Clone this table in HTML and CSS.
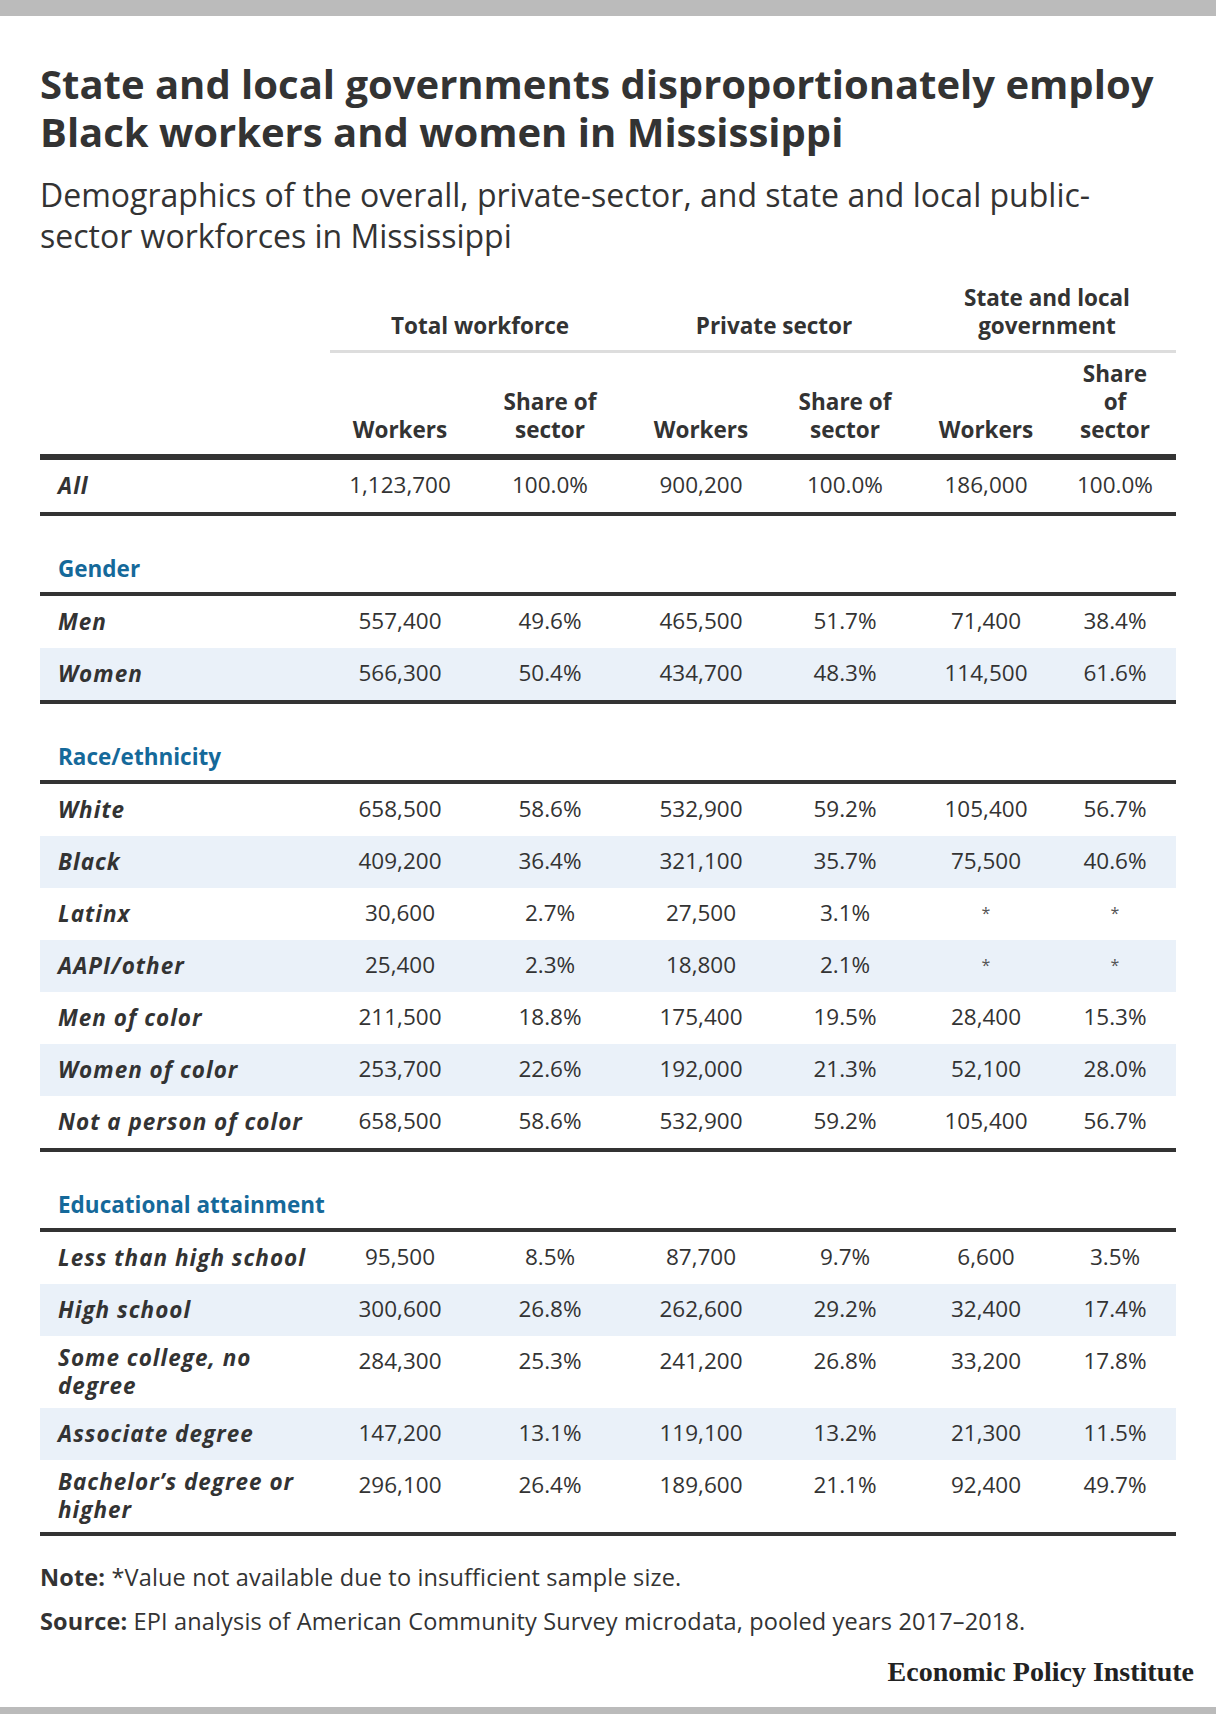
FILE: index.html
```html
<!DOCTYPE html>
<html lang="en">
<head>
<meta charset="utf-8">
<title>State and local governments disproportionately employ Black workers and women in Mississippi</title>
<link rel="stylesheet" href="styles.css">
</head>
<body>
<div class="bar bar-top"></div>
<main class="figure">
  <h1 class="title">State and local governments disproportionately employ Black workers and women in Mississippi</h1>
  <p class="subtitle">Demographics of the overall, private-sector, and state and local public-sector workforces in Mississippi</p>

  <table class="data">
    <colgroup>
      <col class="c-label">
      <col class="c1"><col class="c2"><col class="c3"><col class="c4"><col class="c5"><col class="c6">
    </colgroup>
    <thead>
      <tr class="group">
        <th class="blank"></th>
        <th colspan="2">Total workforce</th>
        <th colspan="2">Private sector</th>
        <th colspan="2">State and local<br>government</th>
      </tr>
      <tr class="sub">
        <th class="blank"></th>
        <th>Workers</th>
        <th>Share of<br>sector</th>
        <th>Workers</th>
        <th>Share of<br>sector</th>
        <th>Workers</th>
        <th>Share<br>of<br>sector</th>
      </tr>
    </thead>
    <tbody>
      <tr class="row last">
        <td class="label">All</td><td>1,123,700</td><td>100.0%</td><td>900,200</td><td>100.0%</td><td>186,000</td><td>100.0%</td>
      </tr>

      <tr class="section"><td colspan="7">Gender</td></tr>
      <tr class="row">
        <td class="label">Men</td><td>557,400</td><td>49.6%</td><td>465,500</td><td>51.7%</td><td>71,400</td><td>38.4%</td>
      </tr>
      <tr class="row alt last">
        <td class="label">Women</td><td>566,300</td><td>50.4%</td><td>434,700</td><td>48.3%</td><td>114,500</td><td>61.6%</td>
      </tr>

      <tr class="section"><td colspan="7">Race/ethnicity</td></tr>
      <tr class="row">
        <td class="label">White</td><td>658,500</td><td>58.6%</td><td>532,900</td><td>59.2%</td><td>105,400</td><td>56.7%</td>
      </tr>
      <tr class="row alt">
        <td class="label">Black</td><td>409,200</td><td>36.4%</td><td>321,100</td><td>35.7%</td><td>75,500</td><td>40.6%</td>
      </tr>
      <tr class="row">
        <td class="label">Latinx</td><td>30,600</td><td>2.7%</td><td>27,500</td><td>3.1%</td><td class="na">*</td><td class="na">*</td>
      </tr>
      <tr class="row alt">
        <td class="label">AAPI/other</td><td>25,400</td><td>2.3%</td><td>18,800</td><td>2.1%</td><td class="na">*</td><td class="na">*</td>
      </tr>
      <tr class="row">
        <td class="label">Men of color</td><td>211,500</td><td>18.8%</td><td>175,400</td><td>19.5%</td><td>28,400</td><td>15.3%</td>
      </tr>
      <tr class="row alt">
        <td class="label">Women of color</td><td>253,700</td><td>22.6%</td><td>192,000</td><td>21.3%</td><td>52,100</td><td>28.0%</td>
      </tr>
      <tr class="row last">
        <td class="label">Not a person of color</td><td>658,500</td><td>58.6%</td><td>532,900</td><td>59.2%</td><td>105,400</td><td>56.7%</td>
      </tr>

      <tr class="section"><td colspan="7">Educational attainment</td></tr>
      <tr class="row">
        <td class="label">Less than high school</td><td>95,500</td><td>8.5%</td><td>87,700</td><td>9.7%</td><td>6,600</td><td>3.5%</td>
      </tr>
      <tr class="row alt">
        <td class="label">High school</td><td>300,600</td><td>26.8%</td><td>262,600</td><td>29.2%</td><td>32,400</td><td>17.4%</td>
      </tr>
      <tr class="row">
        <td class="label">Some college, no<br>degree</td><td>284,300</td><td>25.3%</td><td>241,200</td><td>26.8%</td><td>33,200</td><td>17.8%</td>
      </tr>
      <tr class="row alt">
        <td class="label">Associate degree</td><td>147,200</td><td>13.1%</td><td>119,100</td><td>13.2%</td><td>21,300</td><td>11.5%</td>
      </tr>
      <tr class="row last">
        <td class="label">Bachelor’s degree or<br>higher</td><td>296,100</td><td>26.4%</td><td>189,600</td><td>21.1%</td><td>92,400</td><td>49.7%</td>
      </tr>
    </tbody>
  </table>

  <p class="note note-first"><strong>Note:</strong> *Value not available due to insufficient sample size.</p>
  <p class="note"><strong>Source:</strong> EPI analysis of American Community Survey microdata, pooled years 2017–2018.</p>

  <div class="brand">Economic Policy Institute</div>
</main>
<div class="bar bar-bottom"></div>
</body>
</html>
```
FILE: styles.css
```css
* { box-sizing: border-box; }

html, body {
  margin: 0;
  padding: 0;
  background: #ffffff;
}

body {
  font-family: "Open Sans", "Noto Sans", sans-serif;
  color: #333333;
}

.bar {
  background: #bbbbbb;
}
.bar-top { height: 16px; }
.bar-bottom { height: 7px; margin-top: 21px; }

.figure {
  padding: 0 22px 0 40px;
}

.title {
  margin: 44px 0 0;
  font-size: 40px;
  line-height: 48px;
  font-weight: 700;
  color: #333333;
  max-width: 1140px;
}

.subtitle {
  margin: 18px 0 0;
  font-size: 32px;
  line-height: 41px;
  font-weight: 400;
  color: #333333;
  max-width: 1075px;
}

.data {
  margin-top: 28px;
  width: 1136px;
  table-layout: fixed;
  border-collapse: separate;
  border-spacing: 0;
  font-size: 22.5px;
  line-height: 28px;
}

.c-label { width: 290px; }
.c1 { width: 140px; }
.c2 { width: 160px; }
.c3 { width: 142px; }
.c4 { width: 146px; }
.c5 { width: 136px; }
.c6 { width: 122px; }

.data th {
  font-weight: 700;
  text-align: center;
  vertical-align: bottom;
  padding: 0;
}

.group th {
  padding-bottom: 10px;
  border-bottom: 3px solid #dddddd;
}
.group th.blank {
  border-bottom: none;
}

.sub th {
  padding-top: 7px;
  padding-bottom: 10px;
  border-bottom: 6px solid #333333;
}

.data td {
  padding: 11px 0 0;
  text-align: center;
  vertical-align: top;
  font-weight: 400;
}

.row { height: 52px; }
.row.last { height: 56px; }

.data td.label {
  padding: 8px 0 8px 18px;
  text-align: left;
  vertical-align: middle;
  font-weight: 700;
  font-style: italic;
  letter-spacing: 1px;
  white-space: nowrap;
}

.row.alt td { background: #eaf1f9; }

.row.last td { border-bottom: 4px solid #333333; }

.data td.na {
  color: #555555;
  font-size: 16px;
}

.section td {
  padding: 39px 0 9px 18px;
  text-align: left;
  font-weight: 700;
  color: #15699a;
  border-bottom: 4px solid #333333;
}

.note {
  margin: 16px 0 0;
  font-size: 23.5px;
  line-height: 28px;
  letter-spacing: 0.15px;
}
.note-first { margin-top: 27px; }
.note strong { font-weight: 700; }

.brand {
  margin-top: 23px;
  text-align: right;
  font-family: "Liberation Serif", "Times New Roman", serif;
  font-weight: 700;
  font-size: 28px;
  line-height: 28px;
  color: #222222;
}
```
